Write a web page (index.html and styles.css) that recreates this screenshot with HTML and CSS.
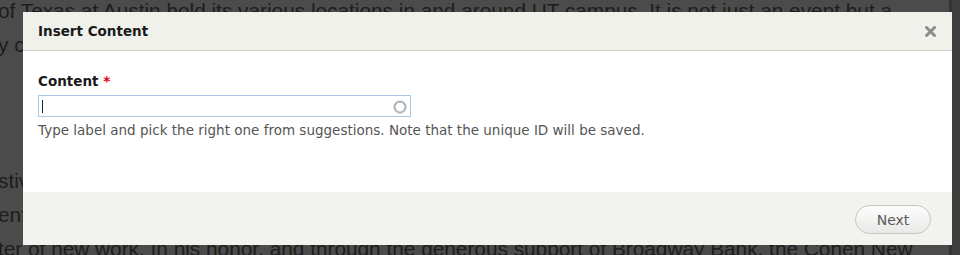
FILE: index.html
```html
<!DOCTYPE html>
<html lang="en">
<head>
  <meta charset="UTF-8">
  <meta name="viewport" content="width=device-width, initial-scale=1.0">
  <title>Insert Content</title>
  <link rel="stylesheet" href="styles.css">
</head>
<body>
  <div class="page">
    <div class="article">
      <p>of Texas at Austin hold its various locations in and around UT campus. It is not just an event but a</p>
      <p>y celebrates the arts and the community that creates them, with events across the whole city</p>
      <p>&nbsp;</p>
      <p>&nbsp;</p>
      <p>&nbsp;</p>
      <p>stival brings together students, faculty and guests for a week of performances</p>
      <p>ents, readings and talks that highlight the best of the department's creative work</p>
      <p>ter of new work. In his honor, and through the generous support of Broadway Bank, the Cohen New</p>
    </div>
    <div class="scrollbar"></div>
  </div>

  <div class="dialog">
    <div class="dialog-title">
      <span>Insert Content</span>
      <button class="close" title="Close">
        <svg width="11" height="11" viewBox="0 0 11 11">
          <path d="M1.5 1.5 L9.5 9.5 M9.5 1.5 L1.5 9.5" stroke="#8c8c8c" stroke-width="3" stroke-linecap="round"/>
        </svg>
      </button>
    </div>

    <div class="dialog-body">
      <label class="field-label" for="content">Content <span class="required">*</span></label>
      <div class="autocomplete">
        <span class="caret"></span>
        <input type="text" id="content">
        <svg class="throbber" width="14" height="14" viewBox="0 0 14 14">
          <circle cx="7" cy="7" r="5.5" fill="none" stroke="#b0b0b0" stroke-width="2"/>
        </svg>
      </div>
      <div class="description">Type label and pick the right one from suggestions. Note that the unique ID will be saved.</div>
    </div>

    <div class="dialog-buttons">
      <button class="button">Next</button>
    </div>
  </div>
</body>
</html>
```

FILE: styles.css
```css
body {
  margin: 0;
  background-color: #4b4b4b;
  overflow: hidden;
}

.page {
  display: flex;
  height: 255px;
}

.article {
  flex: 1;
  margin-top: -6px;
  margin-left: -2px;
  font-family: "Liberation Sans", Arial, sans-serif;
  font-size: 20.8px;
  line-height: 34px;
  color: #1d1d1d;
  overflow: hidden;
}

.article p {
  margin: 0;
  white-space: nowrap;
}

.scrollbar {
  width: 8px;
  background-color: #3e3e3e;
  border-left: 3px solid #333333;
}

/* modal */
.dialog {
  position: absolute;
  left: 23px;
  top: 12px;
  width: 929px;
  height: 233px;
  display: flex;
  flex-direction: column;
  background-color: #ffffff;
  font-family: "DejaVu Sans", "Lucida Grande", sans-serif;
}

.dialog-title {
  height: 38px;
  display: flex;
  align-items: center;
  justify-content: space-between;
  padding: 0 15px;
  background-color: #f1f1ec;
  border-bottom: 1px solid #d4d4d0;
  font-weight: bold;
  font-size: 13.5px;
  color: #1a1a1a;
}

.close {
  border: none;
  background: none;
  padding: 0;
  margin-right: 1px;
  display: flex;
}

.dialog-body {
  flex: 1;
  padding: 22px 15px 0;
}

.field-label {
  display: block;
  font-weight: bold;
  font-size: 13.5px;
  color: #1a1a1a;
  margin-bottom: 6px;
}

.required {
  color: #e00000;
}

.autocomplete {
  position: relative;
  width: 373px;
  height: 22px;
  box-sizing: border-box;
  border: 1px solid #a9c8e6;
  display: flex;
  align-items: center;
}

.autocomplete input {
  flex: 1;
  border: none;
  outline: none;
  background: none;
  padding: 0;
  height: 20px;
}

.caret {
  width: 1px;
  height: 13px;
  background-color: #222222;
  margin: 0 0 0 3px;
}

.throbber {
  margin-right: 3px;
  margin-top: 2px;
}

.description {
  margin-top: 5px;
  font-size: 13.5px;
  color: #555555;
}

.dialog-buttons {
  height: 53px;
  box-sizing: border-box;
  display: flex;
  justify-content: flex-end;
  align-items: flex-start;
  padding: 13px 21px 0;
  background-color: #f2f2ee;
}

.button {
  width: 76px;
  height: 29px;
  border: 1px solid #c6c6c2;
  border-radius: 15px;
  background: linear-gradient(#fdfdfd, #e9e9e7);
  font-family: "DejaVu Sans", "Lucida Grande", sans-serif;
  font-size: 14px;
  color: #5a5a5a;
  padding: 0;
}
```
